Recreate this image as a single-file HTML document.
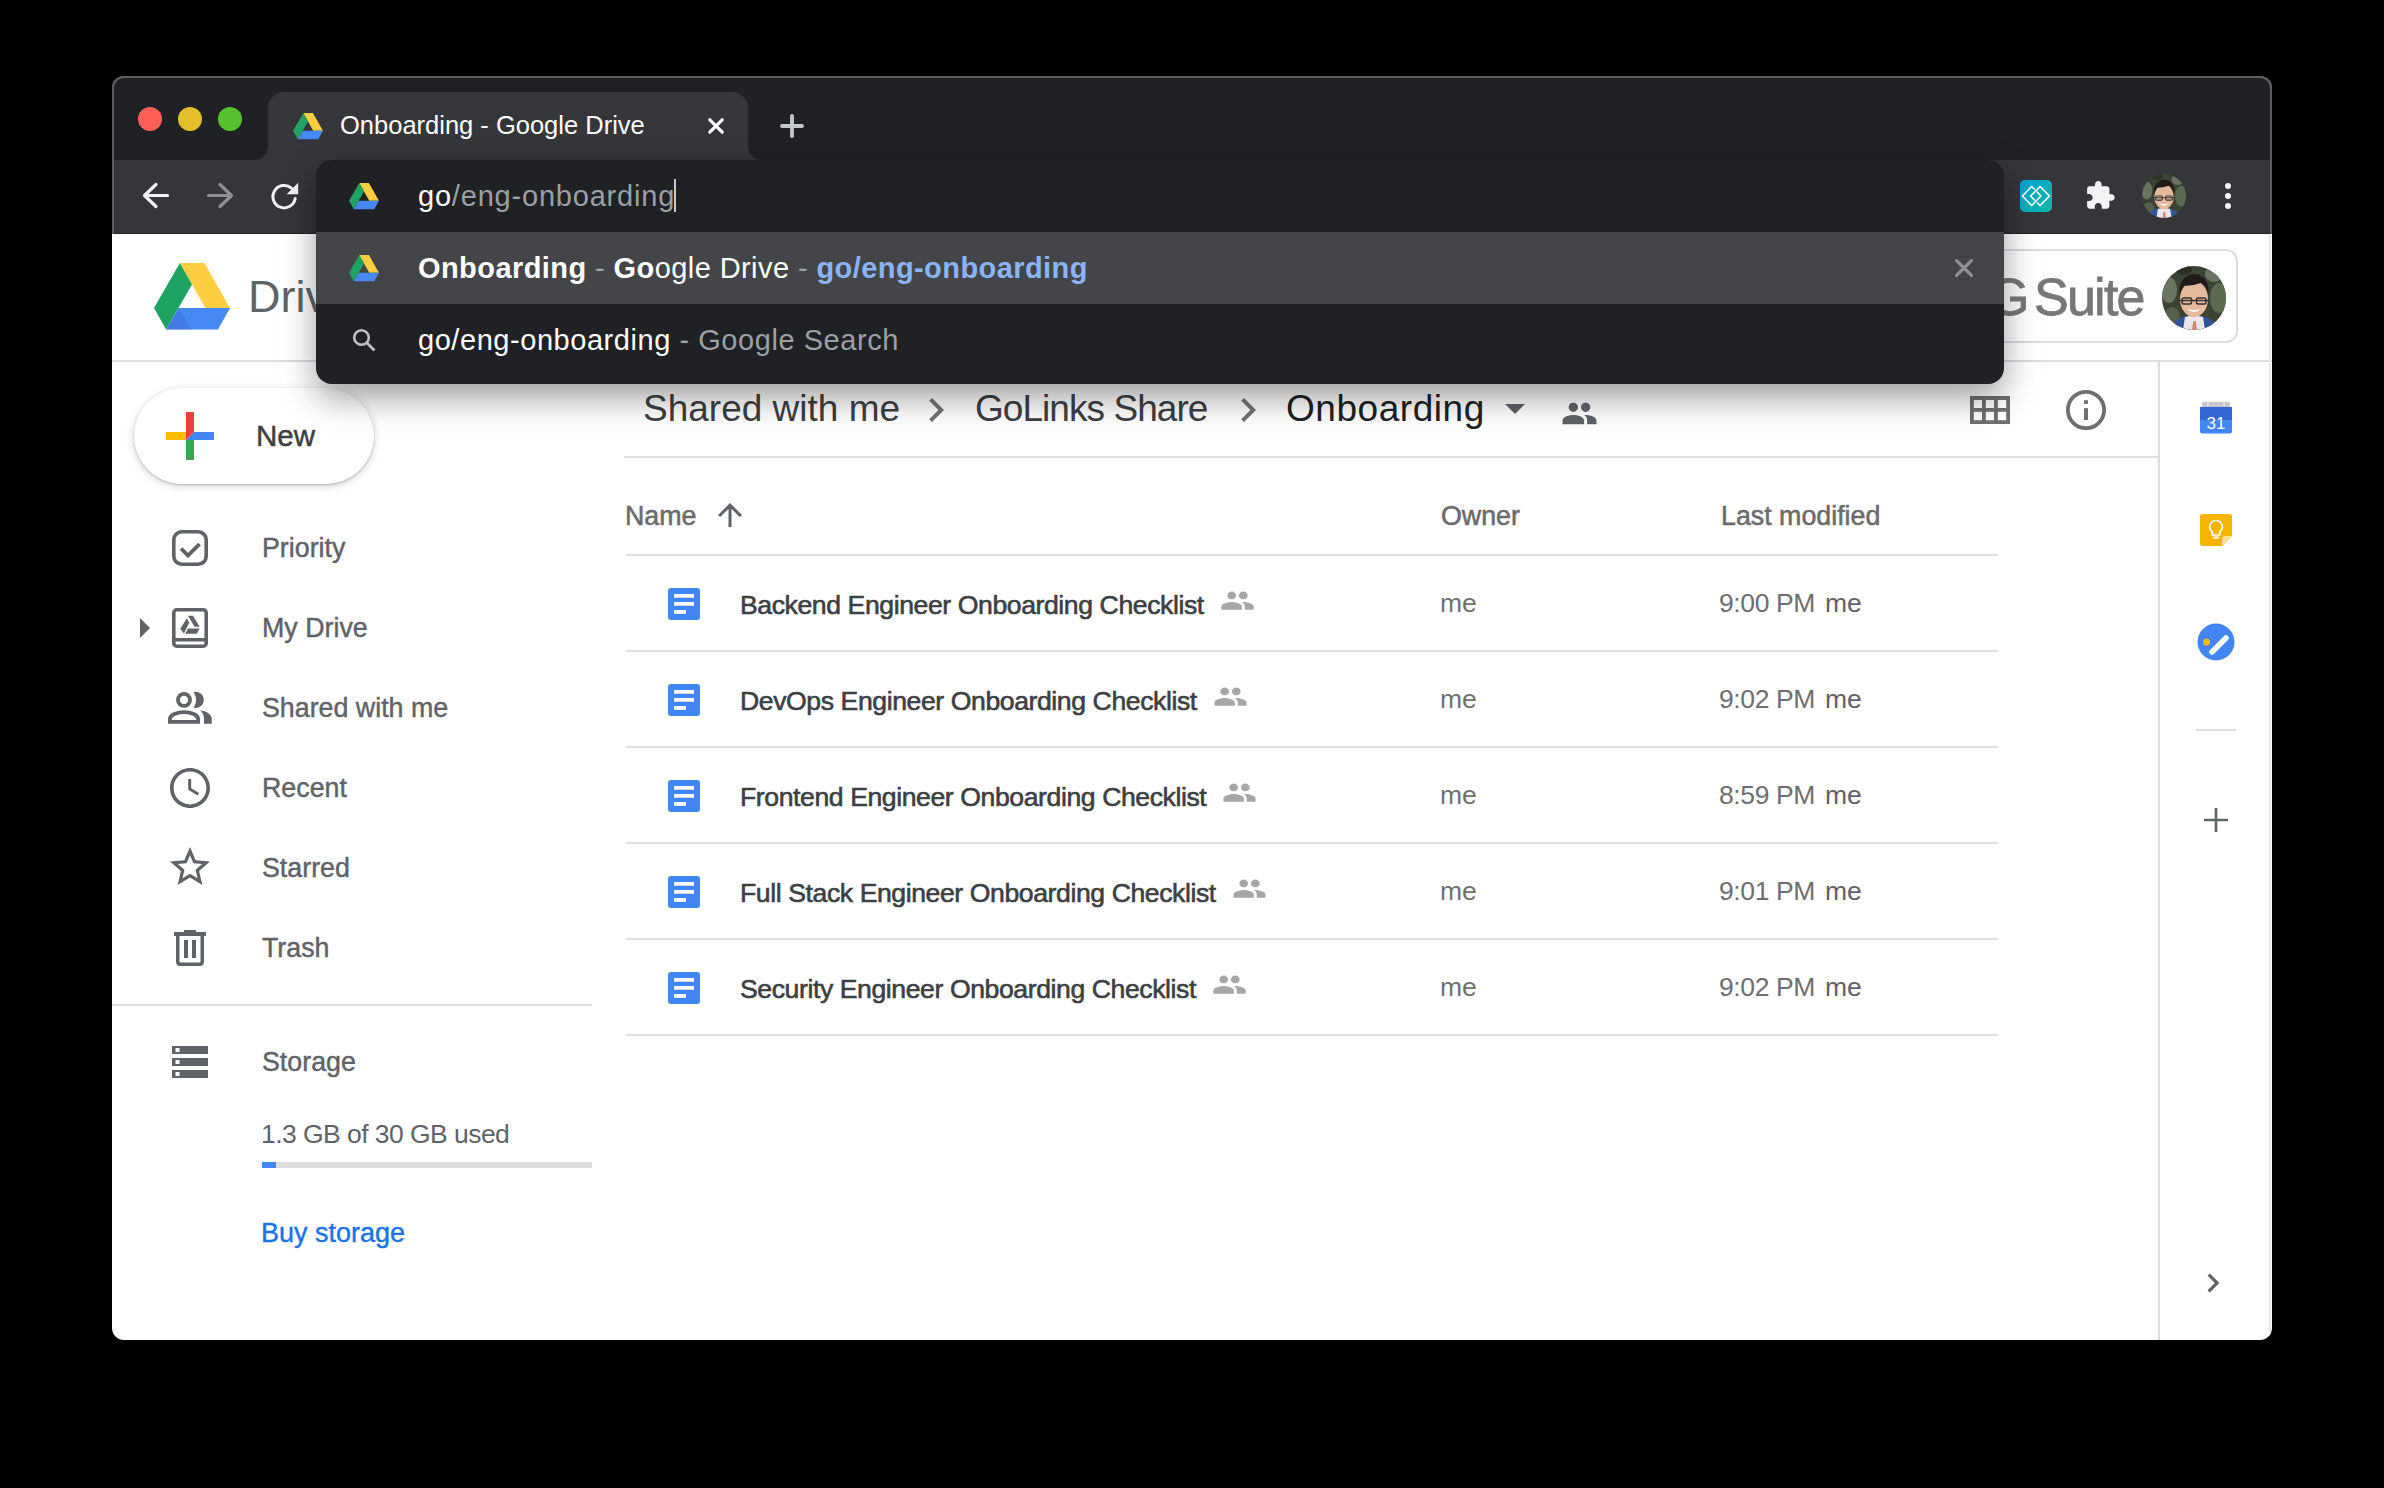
<!DOCTYPE html>
<html><head><meta charset="utf-8">
<style>
*{box-sizing:border-box;margin:0;padding:0}
html,body{width:2384px;height:1488px;overflow:hidden;background:#000;font-family:"Liberation Sans",sans-serif}
.a{position:absolute}
.t{position:absolute;white-space:nowrap;line-height:1}
svg{position:absolute;overflow:visible}
#win{position:absolute;left:112px;top:76px;width:2160px;height:1264px;border-radius:12px;overflow:hidden;background:#fff}
#pg{position:absolute;left:-112px;top:-76px;width:2384px;height:1488px}
#frame{position:absolute;left:112px;top:76px;width:2160px;height:158px;border:2px solid #5c5d60;border-bottom:none;border-radius:12px 12px 0 0;pointer-events:none}
.avatar{border-radius:50%;background:radial-gradient(circle at 50% 45%,#d9a98a 0,#c99478 16%,#2f2a22 17%,#3c4a36 40%,#56604a 60%,#2c3426 100%);overflow:hidden}
.dot{position:absolute;width:24px;height:24px;border-radius:50%;top:107px}
</style></head>
<body>
<div id="win"><div id="pg">
  <!-- tab bar -->
  <div class="a" style="left:112px;top:76px;width:2160px;height:84px;background:#202124"></div>
  <div class="dot" style="left:138px;background:#fe5f57"></div>
  <div class="dot" style="left:178px;background:#e5bf2b"></div>
  <div class="dot" style="left:218px;background:#54c22d"></div>
  <!-- tab -->
  <svg style="left:252px;top:92px" width="512" height="68" viewBox="0 0 512 68"><path d="M2 68A14 14 0 0 0 16 54V16A16 16 0 0 1 32 0H480A16 16 0 0 1 496 16V54A14 14 0 0 0 510 68Z" fill="#35363a"/></svg>
  <svg id="tabdrive" style="left:293px;top:113px" width="30" height="26" viewBox="0 0 76 66">
    <polygon points="25.9,0 50.4,0 76,44.9 51.4,44.9" fill="#ffcd40"/>
    <polygon points="25.9,0 38,21.5 12.1,66.5 0,44.9" fill="#1ea362"/>
    <polygon points="24.7,44.9 76,44.9 64,66.5 12.1,66.5" fill="#4688f4"/>
  </svg>
  <div class="t" id="tabtitle" style="left:340px;top:113px;font-size:25.5px;color:#fff">Onboarding - Google Drive</div>
  <svg style="left:708px;top:118px" width="16" height="16" viewBox="0 0 16 16"><path d="M1.8 1.8L14.2 14.2M14.2 1.8L1.8 14.2" stroke="#fff" stroke-width="3.2" stroke-linecap="round"/></svg>
  <svg style="left:780px;top:114px" width="24" height="24" viewBox="0 0 24 24"><path d="M12 2V22M2 12H22" stroke="#c4c7cc" stroke-width="3.8" stroke-linecap="round"/></svg>

  <!-- toolbar -->
  <div class="a" style="left:112px;top:160px;width:2160px;height:74px;background:#35363a"></div>
  <svg style="left:143px;top:183px" width="26" height="25" viewBox="0 0 26 25"><path d="M1.5 12.5H24.5M13 1.5L1.5 12.5L13 23.5" stroke="#f1f3f4" stroke-width="3.2" fill="none" stroke-linecap="round" stroke-linejoin="round"/></svg>
  <svg style="left:207px;top:183px" width="26" height="25" viewBox="0 0 26 25"><path d="M1.5 12.5H24.5M13 1.5L24.5 12.5L13 23.5" stroke="#8f9093" stroke-width="3.2" fill="none" stroke-linecap="round" stroke-linejoin="round"/></svg>
  <svg style="left:270px;top:182px" width="30" height="28" viewBox="0 0 30 28">
    <path d="M25.2 16.5A11.2 11.2 0 1 1 21.5 6.2" stroke="#f1f3f4" stroke-width="3" fill="none" stroke-linecap="round"/>
    <polygon points="16.6,12.2 28.2,12.2 28.2,0.8" fill="#f1f3f4"/>
  </svg>

  <div class="a" style="left:112px;top:233px;width:2160px;height:1px;background:#1f2023"></div>
  <!-- toolbar right -->
  <div class="a" style="left:2020px;top:180px;width:32px;height:32px;border-radius:5px;background:linear-gradient(135deg,#0aa2d6,#0cb9a4)"></div>
  <svg style="left:2020px;top:180px" width="32" height="32" viewBox="0 0 32 32">
    <path d="M14.0 8.3L11.2 5.5L0.9 16L11.2 26.5L21.5 16L17.4 11.7M14.0 20.3L10 16L20.5 5.5L31 16L20.5 26.5L17.6 23.7" stroke="#fff" stroke-width="1.7" fill="none" stroke-linejoin="round" stroke-linecap="round" transform="translate(16 16) scale(0.9) translate(-16 -16)"/>
  </svg>
  <svg style="left:2086px;top:181px" width="30" height="30" viewBox="0 0 24 24"><path d="M20.5 11H19V7c0-1.1-.9-2-2-2h-4V3.5C13 2.12 11.88 1 10.5 1S8 2.12 8 3.5V5H4c-1.1 0-1.99.9-1.99 2v3.8H3.5c1.49 0 2.7 1.21 2.7 2.7s-1.21 2.7-2.7 2.7H2V20c0 1.1.9 2 2 2h3.8v-1.5c0-1.49 1.21-2.7 2.7-2.7 1.49 0 2.7 1.21 2.7 2.7V22H17c1.1 0 2-.9 2-2v-4h1.5c1.38 0 2.5-1.12 2.5-2.5S21.88 11 20.5 11z" fill="#f1f3f4" transform="translate(-1.2 -1) scale(1.05)"/></svg>
  <svg style="left:2142px;top:174px" width="44" height="44" viewBox="0 0 64 64"><defs><clipPath id="cp1"><circle cx="32" cy="32" r="32"/></clipPath></defs><g clip-path="url(#cp1)">
<rect width="64" height="64" fill="#3b4434"/>
<ellipse cx="7" cy="24" rx="8" ry="13" fill="#6a7560"/><ellipse cx="57" cy="32" rx="9" ry="15" fill="#5d6a52"/><ellipse cx="10" cy="50" rx="8" ry="9" fill="#56604a"/><ellipse cx="52" cy="8" rx="9" ry="8" fill="#6b7461"/><ellipse cx="22" cy="4" rx="8" ry="5" fill="#2a3024"/>
<path d="M8 64L13 55Q22 49 32 50Q42 49 51 55L56 64Z" fill="#2f55a0"/>
<path d="M21 64L23 51Q32 48 41 51L43 64Z" fill="#ece8ea"/>
<path d="M30 64L31.3 55H33.7L35 64Z" fill="#d08474"/>
<ellipse cx="32" cy="33" rx="14" ry="18" fill="#e6b89c"/>
<path d="M17.5 30Q16 10 32 8Q48 9 46.5 30Q45 19 39 17Q31 20 22 20Q19 24 17.5 30Z" fill="#1f1b18"/>
<path d="M18 34.5H46" stroke="#333" stroke-width="1.4"/>
<rect x="20" y="32" width="9.5" height="6" rx="1.5" fill="none" stroke="#333" stroke-width="1.5"/><rect x="34.5" y="32" width="9.5" height="6" rx="1.5" fill="none" stroke="#333" stroke-width="1.5"/>
<path d="M25 43Q32 49 39 43Q32 45 25 43Z" fill="#fff"/>
</g></svg>
  <div class="a" style="left:2225px;top:183px;width:6px;height:6px;border-radius:50%;background:#f1f3f4"></div>
  <div class="a" style="left:2225px;top:193px;width:6px;height:6px;border-radius:50%;background:#f1f3f4"></div>
  <div class="a" style="left:2225px;top:203px;width:6px;height:6px;border-radius:50%;background:#f1f3f4"></div>


  <!-- drive header -->
  <div class="a" style="left:112px;top:360px;width:2160px;height:2px;background:#dadce0"></div>
  <svg style="left:154px;top:263px" width="76" height="66" viewBox="0 0 76 66">
    <polygon points="25.9,0 50.4,0 76,44.9 51.4,44.9" fill="#ffcd40"/>
    <polygon points="25.9,0 38,21.5 12.1,66.5 0,44.9" fill="#1ea362"/>
    <polygon points="24.7,44.9 76,44.9 64,66.5 12.1,66.5" fill="#4688f4"/>
    <polygon points="24.7,44.9 37,66.5 12.1,66.5" fill="#3f6fd8" opacity="0.5"/>
  </svg>
  <div class="t" id="drivetxt" style="left:248px;top:274.0px;font-size:45px;color:#5f6368">Drive</div>
  <div class="a" style="left:1900px;top:249px;width:2340px;height:94px;border:2px solid #dadce0;border-radius:12px;width:338px"></div>
  <div class="t" id="gsuiteG" style="left:1989px;top:270.5px;font-size:52px;color:#777;-webkit-text-stroke:0.8px #777">G</div><div class="t" id="gsuite" style="left:2034px;top:270.5px;font-size:52px;color:#777;letter-spacing:-1.75px;-webkit-text-stroke:0.8px #777">Suite</div>
  <svg style="left:2162px;top:266px" width="64" height="64" viewBox="0 0 64 64"><defs><clipPath id="cp2"><circle cx="32" cy="32" r="32"/></clipPath></defs><g clip-path="url(#cp2)">
<rect width="64" height="64" fill="#3b4434"/>
<ellipse cx="7" cy="24" rx="8" ry="13" fill="#6a7560"/><ellipse cx="57" cy="32" rx="9" ry="15" fill="#5d6a52"/><ellipse cx="10" cy="50" rx="8" ry="9" fill="#56604a"/><ellipse cx="52" cy="8" rx="9" ry="8" fill="#6b7461"/><ellipse cx="22" cy="4" rx="8" ry="5" fill="#2a3024"/>
<path d="M8 64L13 55Q22 49 32 50Q42 49 51 55L56 64Z" fill="#2f55a0"/>
<path d="M21 64L23 51Q32 48 41 51L43 64Z" fill="#ece8ea"/>
<path d="M30 64L31.3 55H33.7L35 64Z" fill="#d08474"/>
<ellipse cx="32" cy="33" rx="14" ry="18" fill="#e6b89c"/>
<path d="M17.5 30Q16 10 32 8Q48 9 46.5 30Q45 19 39 17Q31 20 22 20Q19 24 17.5 30Z" fill="#1f1b18"/>
<path d="M18 34.5H46" stroke="#333" stroke-width="1.4"/>
<rect x="20" y="32" width="9.5" height="6" rx="1.5" fill="none" stroke="#333" stroke-width="1.5"/><rect x="34.5" y="32" width="9.5" height="6" rx="1.5" fill="none" stroke="#333" stroke-width="1.5"/>
<path d="M25 43Q32 49 39 43Q32 45 25 43Z" fill="#fff"/>
</g></svg>

  <!-- right panel -->
  <div class="a" style="left:2158px;top:362px;width:2px;height:980px;background:#dadce0"></div>
  <div class="a" style="left:2269px;top:234px;width:2px;height:1108px;background:#e8eaed"></div>

  <div class="a" style="left:134px;top:388px;width:240px;height:96px;border-radius:48px;background:#fff;box-shadow:0 1px 2px rgba(60,64,67,0.3),0 2px 6px 2px rgba(60,64,67,0.15)"></div>
  <svg style="left:166px;top:412px" width="48" height="48" viewBox="0 0 48 48">
    <rect x="0" y="20" width="20" height="8" fill="#fbbc04"/>
    <rect x="20" y="28" width="8" height="20" fill="#34a853"/>
    <polygon points="20,28 28,20 48,20 48,28" fill="#4285f4"/>
    <polygon points="20,0 28,0 28,20 20,28" fill="#ea4335"/>
  </svg>
  <div class="t" id="newtxt" style="left:256px;top:421.4px;font-size:29.5px;color:#3c4043;-webkit-text-stroke:0.5px #3c4043;">New</div>
  <svg style="left:166px;top:524px" width="48" height="48" viewBox="0 0 48 48">
    <rect x="7.8" y="7.8" width="32.4" height="32.4" rx="8" fill="none" stroke="#5f6368" stroke-width="3.6"/>
    <path d="M15 24.5L22 31.5L33.5 20" fill="none" stroke="#5f6368" stroke-width="3.8"/>
  </svg>
  <svg style="left:140px;top:618px" width="10" height="20" viewBox="0 0 10 20"><polygon points="0,0 10,10 0,20" fill="#5f6368"/></svg>
  <svg style="left:166px;top:604px" width="48" height="48" viewBox="0 0 48 48">
    <rect x="7.8" y="5.8" width="32.4" height="36.4" rx="3" fill="none" stroke="#5f6368" stroke-width="3.6"/>
    <rect x="6" y="34" width="36" height="3.5" fill="#5f6368"/>
    <polygon points="22,11.8 27,11.8 33.6,22.7 28.5,22.7" fill="#5f6368"/>
    <polygon points="20.8,14.5 23.3,18.6 17.9,29.5 14.2,24.7" fill="#5f6368"/>
    <polygon points="22,24.4 33.6,24.4 30.7,29.8 19.2,29.8" fill="#5f6368"/>
  </svg>
  <svg style="left:166px;top:684px" width="48" height="48" viewBox="0 0 48 48">
    <circle cx="18" cy="15.9" r="6.05" fill="none" stroke="#5f6368" stroke-width="3.75"/>
    <path d="M3.9 37.9V35C3.9 30.8 11 28.1 18 28.1S32.1 30.8 32.1 35V37.9Z" fill="none" stroke="#5f6368" stroke-width="3.8"/>
    <path d="M27.7 8.1A8.05 8.05 0 1 1 27.7 23.7A14.9 14.9 0 0 0 27.7 8.1Z" fill="#5f6368"/>
    <path d="M34 26.2C40 27 45.8 30 45.8 35V39.8H38V35C38 31 36.5 28 34 26.2Z" fill="#5f6368"/>
  </svg>
  <svg style="left:166px;top:764px" width="48" height="48" viewBox="0 0 24 24"><path fill="#5f6368" d="M11.99 2C6.47 2 2 6.48 2 12s4.47 10 9.99 10C17.52 22 22 17.52 22 12S17.52 2 11.99 2zM12 20.2c-4.53 0-8.2-3.67-8.2-8.2S7.47 3.8 12 3.8s8.2 3.67 8.2 8.2-3.67 8.2-8.2 8.2zm.6-12.7h-1.5v5.4l4.7 2.8.75-1.23-3.95-2.35z"/></svg>
  <svg style="left:166px;top:843px" width="48" height="48" viewBox="0 0 24 24"><path fill="#5f6368" d="M22 9.24l-7.19-.62L12 2 9.19 8.63 2 9.24l5.46 4.73L5.82 21 12 17.27 18.18 21l-1.63-7.03L22 9.24zM12 15.4l-3.76 2.27 1-4.28-3.32-2.88 4.38-.38L12 6.1l1.71 4.04 4.38.38-3.32 2.88 1 4.28L12 15.4z"/></svg>
  <svg style="left:166px;top:924px" width="48" height="48" viewBox="0 0 48 48">
    <rect x="18" y="6" width="12" height="4" fill="#5f6368"/>
    <rect x="8" y="8" width="32" height="4" fill="#5f6368"/>
    <path d="M11.75 11V37.5Q11.75 40.25 14.5 40.25H33.5Q36.25 40.25 36.25 37.5V11" fill="none" stroke="#5f6368" stroke-width="3.5"/>
    <rect x="18" y="16" width="4" height="18" fill="#5f6368"/>
    <rect x="26" y="16" width="4" height="18" fill="#5f6368"/>
  </svg>
  <svg style="left:166px;top:1038px" width="48" height="48" viewBox="0 0 48 48">
    <rect x="6" y="8" width="36" height="8" fill="#5f6368"/><rect x="6" y="20" width="36" height="8" fill="#5f6368"/><rect x="6" y="32" width="36" height="8" fill="#5f6368"/>
    <rect x="9.5" y="10" width="4" height="4" fill="#fff"/><rect x="9.5" y="22" width="4" height="4" fill="#fff"/><rect x="9.5" y="34" width="4" height="4" fill="#fff"/>
  </svg>
  <div class="t" id="nav0" style="left:262px;top:535.2px;font-size:26.8px;color:#5f6368;-webkit-text-stroke:0.45px #5f6368;">Priority</div>
  <div class="t" id="nav1" style="left:262px;top:615.2px;font-size:26.8px;color:#5f6368;-webkit-text-stroke:0.45px #5f6368;">My Drive</div>
  <div class="t" id="nav2" style="left:262px;top:695.2px;font-size:26.8px;color:#5f6368;-webkit-text-stroke:0.45px #5f6368;">Shared with me</div>
  <div class="t" id="nav3" style="left:262px;top:775.2px;font-size:26.8px;color:#5f6368;-webkit-text-stroke:0.45px #5f6368;">Recent</div>
  <div class="t" id="nav4" style="left:262px;top:855.2px;font-size:26.8px;color:#5f6368;-webkit-text-stroke:0.45px #5f6368;">Starred</div>
  <div class="t" id="nav5" style="left:262px;top:935.2px;font-size:26.8px;color:#5f6368;-webkit-text-stroke:0.45px #5f6368;">Trash</div>
  <div class="a" style="left:112px;top:1004px;width:480px;height:2px;background:#dadce0"></div>
  <div class="t" id="stor" style="left:262px;top:1049.2px;font-size:26.8px;color:#5f6368;-webkit-text-stroke:0.45px #5f6368;">Storage</div>
  <div class="t" id="used" style="left:261px;top:1120.7px;font-size:26.5px;color:#5f6368;letter-spacing:-0.55px;">1.3 GB of 30 GB used</div>
  <div class="a" style="left:262px;top:1162px;width:330px;height:6px;background:#dedede"></div>
  <div class="a" style="left:262px;top:1162px;width:14px;height:6px;background:#4285f4"></div>
  <div class="t" id="buy" style="left:261px;top:1219.5px;font-size:27px;color:#1a73e8;-webkit-text-stroke:0.4px #1a73e8;">Buy storage</div>
  <div class="t" id="bc1" style="left:643px;top:389.9px;font-size:37px;color:#3c4043;">Shared with me</div>
  <div class="t" id="bc2" style="left:975px;top:389.9px;font-size:37px;color:#3c4043;letter-spacing:-0.95px;">GoLinks Share</div>
  <div class="t" id="bc3" style="left:1286px;top:389.9px;font-size:37px;color:#202124;letter-spacing:0.55px;">Onboarding</div>
  <svg style="left:912px;top:386px" width="48" height="48" viewBox="0 0 24 24"><path fill="#757575" d="M10 6L8.59 7.41 13.17 12l-4.58 4.59L10 18l6-6z"/></svg>
  <svg style="left:1224px;top:386px" width="48" height="48" viewBox="0 0 24 24"><path fill="#757575" d="M10 6L8.59 7.41 13.17 12l-4.58 4.59L10 18l6-6z"/></svg>
  <svg style="left:1491px;top:384px" width="48" height="48" viewBox="0 0 24 24"><path fill="#5f6368" d="M7 10l5 5 5-5z"/></svg>
  <svg style="left:1561px;top:395px" width="37" height="37" viewBox="0 0 24 24"><path fill="#5f6368" d="M16 11c1.66 0 2.99-1.34 2.99-3S17.66 5 16 5c-1.66 0-3 1.34-3 3s1.34 3 3 3zm-8 0c1.66 0 2.99-1.34 2.99-3S9.66 5 8 5C6.34 5 5 6.34 5 8s1.34 3 3 3zm0 2c-2.33 0-7 1.17-7 3.5V19h14v-2.5c0-2.33-4.67-3.5-7-3.5zm8 0c-.29 0-.62.02-.97.05 1.16.84 1.97 1.97 1.97 3.45V19h6v-2.5c0-2.33-4.67-3.5-7-3.5z"/></svg>
  <svg style="left:1970px;top:396px" width="40" height="28" viewBox="0 0 40 28"><path fill="#6f6f6f" fill-rule="evenodd" d="M0 0H40V28H0Z M3.8 3.9V12H12V3.9Z M15.8 3.9V12H24V3.9Z M27.8 3.9V12H36.2V3.9Z M3.8 15.8V24.2H12V15.8Z M15.8 15.8V24.2H24V15.8Z M27.8 15.8V24.2H36.2V15.8Z"/></svg>
  <svg style="left:2066px;top:390px" width="40" height="40" viewBox="0 0 40 40">
    <circle cx="20" cy="20" r="18.1" fill="none" stroke="#6f6f6f" stroke-width="3.8"/>
    <rect x="18" y="10.2" width="4" height="3.7" fill="#6f6f6f"/><rect x="18" y="18.2" width="4" height="11.8" fill="#6f6f6f"/>
  </svg>
  <div class="a" style="left:624px;top:456px;width:1535px;height:2px;background:#dadce0"></div>
  <div class="t" id="hname" style="left:625px;top:502.6px;font-size:26.8px;color:#6b6b6b;-webkit-text-stroke:0.55px #6b6b6b;">Name</div>
  <svg style="left:712px;top:497px" width="36" height="36" viewBox="0 0 24 24"><path fill="#5f6368" d="M4 12l1.41 1.41L11 7.83V20h2V7.83l5.58 5.59L20 12l-8-8-8 8z"/></svg>
  <div class="t" id="howner" style="left:1441px;top:502.6px;font-size:26.8px;color:#6b6b6b;-webkit-text-stroke:0.55px #6b6b6b;">Owner</div>
  <div class="t" id="hmod" style="left:1721px;top:502.6px;font-size:26.8px;color:#6b6b6b;-webkit-text-stroke:0.55px #6b6b6b;">Last modified</div>
  <div class="a" style="left:626px;top:554px;width:1372px;height:2px;background:#dadce0"></div>
  <svg style="left:668px;top:588px" width="32" height="32" viewBox="0 0 32 32"><rect width="32" height="32" rx="3" fill="#4285f4"/><rect x="6" y="6" width="20" height="3.7" fill="#fff"/><rect x="6" y="14" width="20" height="3.7" fill="#fff"/><rect x="6" y="22" width="12" height="3.8" fill="#fff"/></svg>
  <div class="t" id="fn0" style="left:740px;top:592.4px;font-size:26.6px;letter-spacing:-0.41px;color:#3c4043;-webkit-text-stroke:0.6px #3c4043">Backend Engineer Onboarding Checklist<span style="display:inline-block;position:relative;width:35px;height:0;margin-left:17px"><svg class="shr" style="left:-1px;top:-29px" width="35" height="31.2" viewBox="0 0 24 24" preserveAspectRatio="none"><path fill="#a6a6a6" d="M16 11c1.66 0 2.99-1.34 2.99-3S17.66 5 16 5c-1.66 0-3 1.34-3 3s1.34 3 3 3zm-8 0c1.66 0 2.99-1.34 2.99-3S9.66 5 8 5C6.34 5 5 6.34 5 8s1.34 3 3 3zm0 2c-2.33 0-7 1.17-7 3.5V19h14v-2.5c0-2.33-4.67-3.5-7-3.5zm8 0c-.29 0-.62.02-.97.05 1.16.84 1.97 1.97 1.97 3.45V19h6v-2.5c0-2.33-4.67-3.5-7-3.5z"/></svg></span></div>
  <div class="t" style="left:1440px;top:589.5px;font-size:26.5px;color:#707070;">me</div>
  <div class="t" id="dt0" style="left:1719px;top:589.5px;font-size:26.5px;color:#6e6e6e;letter-spacing:-0.4px;">9:00 PM</div>
  <div class="t" style="left:1825px;top:589.5px;font-size:26.5px;color:#5f6368;">me</div>
  <div class="a" style="left:626px;top:650px;width:1372px;height:2px;background:#dfe1e4"></div>
  <svg style="left:668px;top:684px" width="32" height="32" viewBox="0 0 32 32"><rect width="32" height="32" rx="3" fill="#4285f4"/><rect x="6" y="6" width="20" height="3.7" fill="#fff"/><rect x="6" y="14" width="20" height="3.7" fill="#fff"/><rect x="6" y="22" width="12" height="3.8" fill="#fff"/></svg>
  <div class="t" id="fn1" style="left:740px;top:688.4px;font-size:26.6px;letter-spacing:-0.41px;color:#3c4043;-webkit-text-stroke:0.6px #3c4043">DevOps Engineer Onboarding Checklist<span style="display:inline-block;position:relative;width:35px;height:0;margin-left:17px"><svg class="shr" style="left:-1px;top:-29px" width="35" height="31.2" viewBox="0 0 24 24" preserveAspectRatio="none"><path fill="#a6a6a6" d="M16 11c1.66 0 2.99-1.34 2.99-3S17.66 5 16 5c-1.66 0-3 1.34-3 3s1.34 3 3 3zm-8 0c1.66 0 2.99-1.34 2.99-3S9.66 5 8 5C6.34 5 5 6.34 5 8s1.34 3 3 3zm0 2c-2.33 0-7 1.17-7 3.5V19h14v-2.5c0-2.33-4.67-3.5-7-3.5zm8 0c-.29 0-.62.02-.97.05 1.16.84 1.97 1.97 1.97 3.45V19h6v-2.5c0-2.33-4.67-3.5-7-3.5z"/></svg></span></div>
  <div class="t" style="left:1440px;top:685.5px;font-size:26.5px;color:#707070;">me</div>
  <div class="t" id="dt1" style="left:1719px;top:685.5px;font-size:26.5px;color:#6e6e6e;letter-spacing:-0.4px;">9:02 PM</div>
  <div class="t" style="left:1825px;top:685.5px;font-size:26.5px;color:#5f6368;">me</div>
  <div class="a" style="left:626px;top:746px;width:1372px;height:2px;background:#dfe1e4"></div>
  <svg style="left:668px;top:780px" width="32" height="32" viewBox="0 0 32 32"><rect width="32" height="32" rx="3" fill="#4285f4"/><rect x="6" y="6" width="20" height="3.7" fill="#fff"/><rect x="6" y="14" width="20" height="3.7" fill="#fff"/><rect x="6" y="22" width="12" height="3.8" fill="#fff"/></svg>
  <div class="t" id="fn2" style="left:740px;top:784.4px;font-size:26.6px;letter-spacing:-0.41px;color:#3c4043;-webkit-text-stroke:0.6px #3c4043">Frontend Engineer Onboarding Checklist<span style="display:inline-block;position:relative;width:35px;height:0;margin-left:17px"><svg class="shr" style="left:-1px;top:-29px" width="35" height="31.2" viewBox="0 0 24 24" preserveAspectRatio="none"><path fill="#a6a6a6" d="M16 11c1.66 0 2.99-1.34 2.99-3S17.66 5 16 5c-1.66 0-3 1.34-3 3s1.34 3 3 3zm-8 0c1.66 0 2.99-1.34 2.99-3S9.66 5 8 5C6.34 5 5 6.34 5 8s1.34 3 3 3zm0 2c-2.33 0-7 1.17-7 3.5V19h14v-2.5c0-2.33-4.67-3.5-7-3.5zm8 0c-.29 0-.62.02-.97.05 1.16.84 1.97 1.97 1.97 3.45V19h6v-2.5c0-2.33-4.67-3.5-7-3.5z"/></svg></span></div>
  <div class="t" style="left:1440px;top:781.5px;font-size:26.5px;color:#707070;">me</div>
  <div class="t" id="dt2" style="left:1719px;top:781.5px;font-size:26.5px;color:#6e6e6e;letter-spacing:-0.4px;">8:59 PM</div>
  <div class="t" style="left:1825px;top:781.5px;font-size:26.5px;color:#5f6368;">me</div>
  <div class="a" style="left:626px;top:842px;width:1372px;height:2px;background:#dfe1e4"></div>
  <svg style="left:668px;top:876px" width="32" height="32" viewBox="0 0 32 32"><rect width="32" height="32" rx="3" fill="#4285f4"/><rect x="6" y="6" width="20" height="3.7" fill="#fff"/><rect x="6" y="14" width="20" height="3.7" fill="#fff"/><rect x="6" y="22" width="12" height="3.8" fill="#fff"/></svg>
  <div class="t" id="fn3" style="left:740px;top:880.4px;font-size:26.6px;letter-spacing:-0.41px;color:#3c4043;-webkit-text-stroke:0.6px #3c4043">Full Stack Engineer Onboarding Checklist<span style="display:inline-block;position:relative;width:35px;height:0;margin-left:17px"><svg class="shr" style="left:-1px;top:-29px" width="35" height="31.2" viewBox="0 0 24 24" preserveAspectRatio="none"><path fill="#a6a6a6" d="M16 11c1.66 0 2.99-1.34 2.99-3S17.66 5 16 5c-1.66 0-3 1.34-3 3s1.34 3 3 3zm-8 0c1.66 0 2.99-1.34 2.99-3S9.66 5 8 5C6.34 5 5 6.34 5 8s1.34 3 3 3zm0 2c-2.33 0-7 1.17-7 3.5V19h14v-2.5c0-2.33-4.67-3.5-7-3.5zm8 0c-.29 0-.62.02-.97.05 1.16.84 1.97 1.97 1.97 3.45V19h6v-2.5c0-2.33-4.67-3.5-7-3.5z"/></svg></span></div>
  <div class="t" style="left:1440px;top:877.5px;font-size:26.5px;color:#707070;">me</div>
  <div class="t" id="dt3" style="left:1719px;top:877.5px;font-size:26.5px;color:#6e6e6e;letter-spacing:-0.4px;">9:01 PM</div>
  <div class="t" style="left:1825px;top:877.5px;font-size:26.5px;color:#5f6368;">me</div>
  <div class="a" style="left:626px;top:938px;width:1372px;height:2px;background:#dfe1e4"></div>
  <svg style="left:668px;top:972px" width="32" height="32" viewBox="0 0 32 32"><rect width="32" height="32" rx="3" fill="#4285f4"/><rect x="6" y="6" width="20" height="3.7" fill="#fff"/><rect x="6" y="14" width="20" height="3.7" fill="#fff"/><rect x="6" y="22" width="12" height="3.8" fill="#fff"/></svg>
  <div class="t" id="fn4" style="left:740px;top:976.4px;font-size:26.6px;letter-spacing:-0.41px;color:#3c4043;-webkit-text-stroke:0.6px #3c4043">Security Engineer Onboarding Checklist<span style="display:inline-block;position:relative;width:35px;height:0;margin-left:17px"><svg class="shr" style="left:-1px;top:-29px" width="35" height="31.2" viewBox="0 0 24 24" preserveAspectRatio="none"><path fill="#a6a6a6" d="M16 11c1.66 0 2.99-1.34 2.99-3S17.66 5 16 5c-1.66 0-3 1.34-3 3s1.34 3 3 3zm-8 0c1.66 0 2.99-1.34 2.99-3S9.66 5 8 5C6.34 5 5 6.34 5 8s1.34 3 3 3zm0 2c-2.33 0-7 1.17-7 3.5V19h14v-2.5c0-2.33-4.67-3.5-7-3.5zm8 0c-.29 0-.62.02-.97.05 1.16.84 1.97 1.97 1.97 3.45V19h6v-2.5c0-2.33-4.67-3.5-7-3.5z"/></svg></span></div>
  <div class="t" style="left:1440px;top:973.5px;font-size:26.5px;color:#707070;">me</div>
  <div class="t" id="dt4" style="left:1719px;top:973.5px;font-size:26.5px;color:#6e6e6e;letter-spacing:-0.4px;">9:02 PM</div>
  <div class="t" style="left:1825px;top:973.5px;font-size:26.5px;color:#5f6368;">me</div>
  <div class="a" style="left:626px;top:1034px;width:1372px;height:2px;background:#dfe1e4"></div>
  <svg style="left:2200px;top:401px" width="32" height="33" viewBox="0 0 32 33">
    <rect x="2" y="0.7" width="28" height="7" rx="2" fill="#c6c6c6"/>
    <circle cx="8" cy="3.5" r="1.2" fill="#eee"/><circle cx="24" cy="3.5" r="1.2" fill="#eee"/>
    <path d="M0 6H32V19H0Z" fill="#3367d6"/>
    <path d="M0 19H32V30.5Q32 32.6 30 32.6H2Q0 32.6 0 30.5Z" fill="#4285f4"/>
    <text x="16" y="27.5" font-family="Liberation Sans" font-size="17" fill="#fff" text-anchor="middle">31</text>
  </svg>
  <svg style="left:2200px;top:514px" width="32" height="32" viewBox="0 0 32 32">
    <path d="M3 0H29Q32 0 32 3V22L22 32H3Q0 32 0 29V3Q0 0 3 0Z" fill="#f4b400"/>
    <path d="M22 32V25Q22 22 25 22H32Z" fill="#fde293"/>
    <path d="M16 6.5A6.2 6.2 0 0 0 12.3 17.7V21H19.7V17.7A6.2 6.2 0 0 0 16 6.5Z" fill="none" stroke="#fff" stroke-width="1.6"/>
    <rect x="13.2" y="22.5" width="5.6" height="2.2" fill="#fff"/>
  </svg>
  <svg style="left:2197px;top:623px" width="38" height="38" viewBox="0 0 38 38">
    <circle cx="19" cy="19" r="18.5" fill="#4285f4"/>
    <circle cx="9.5" cy="19" r="3.5" fill="#fbbc04"/>
    <path d="M15 29L29 15" stroke="#fff" stroke-width="5.5" stroke-linecap="round"/>
  </svg>
  <div class="a" style="left:2196px;top:729px;width:40px;height:2px;background:#dadce0"></div>
  <svg style="left:2204px;top:808px" width="24" height="24" viewBox="0 0 24 24"><path d="M12 0V24M0 12H24" stroke="#5f6368" stroke-width="2.6"/></svg>
  <svg style="left:2194px;top:1264px" width="38" height="38" viewBox="0 0 24 24"><path fill="#5f6368" d="M10 6L8.59 7.41 13.17 12l-4.58 4.59L10 18l6-6z"/></svg>
  <!-- CONTENT PLACEHOLDER -->

  <!-- omnibox dropdown -->
  <div class="a" id="dd" style="left:316px;top:160px;width:1688px;height:224px;background:#202124;border-radius:16px;box-shadow:0 14px 34px rgba(0,0,0,0.38);overflow:hidden">
    <div class="a" style="left:0;top:72px;width:1688px;height:72px;background:#444548"></div>
  </div>
  <svg style="left:349px;top:183px" width="30" height="26" viewBox="0 0 76 66">
    <polygon points="25.9,0 50.4,0 76,44.9 51.4,44.9" fill="#ffcd40"/>
    <polygon points="25.9,0 38,21.5 12.1,66.5 0,44.9" fill="#1ea362"/>
    <polygon points="24.7,44.9 76,44.9 64,66.5 12.1,66.5" fill="#4688f4"/>
  </svg>
  <div class="t" id="omni" style="left:418px;top:182px;font-size:29px;letter-spacing:0.8px;color:#9aa0a6"><span style="color:#fff">go</span>/eng-onboarding</div>
  <div class="a" style="left:674px;top:179px;width:2px;height:33px;background:#c8c8c8"></div>
  <svg style="left:349px;top:255px" width="30" height="26" viewBox="0 0 76 66">
    <polygon points="25.9,0 50.4,0 76,44.9 51.4,44.9" fill="#ffcd40"/>
    <polygon points="25.9,0 38,21.5 12.1,66.5 0,44.9" fill="#1ea362"/>
    <polygon points="24.7,44.9 76,44.9 64,66.5 12.1,66.5" fill="#4688f4"/>
  </svg>
  <div class="t" id="sugg1" style="left:418px;top:254px;font-size:29px;letter-spacing:0.42px;color:#fff"><b>Onboarding</b> <span style="color:#9aa0a6">-</span> <b>Go</b>ogle Drive <span style="color:#9aa0a6">-</span> <b style="color:#8ab4f8">go/eng-onboarding</b></div>
  <svg style="left:1955px;top:259px" width="18" height="18" viewBox="0 0 18 18"><path d="M1.6 1.6L16.4 16.4M16.4 1.6L1.6 16.4" stroke="#919294" stroke-width="3.2" stroke-linecap="round"/></svg>
  <svg style="left:352px;top:328px" width="24" height="24" viewBox="0 0 24 24"><circle cx="9.5" cy="9.5" r="7.3" stroke="#bdc1c6" stroke-width="2.6" fill="none"/><path d="M14.8 14.8L22.5 22.5" stroke="#bdc1c6" stroke-width="2.8"/></svg>
  <div class="t" id="sugg2" style="left:418px;top:326px;font-size:29px;letter-spacing:0.55px;color:#fff">go/eng-onboarding <span style="color:#9aa0a6">- Google Search</span></div>
</div></div>
<div id="frame"></div>
</body></html>
